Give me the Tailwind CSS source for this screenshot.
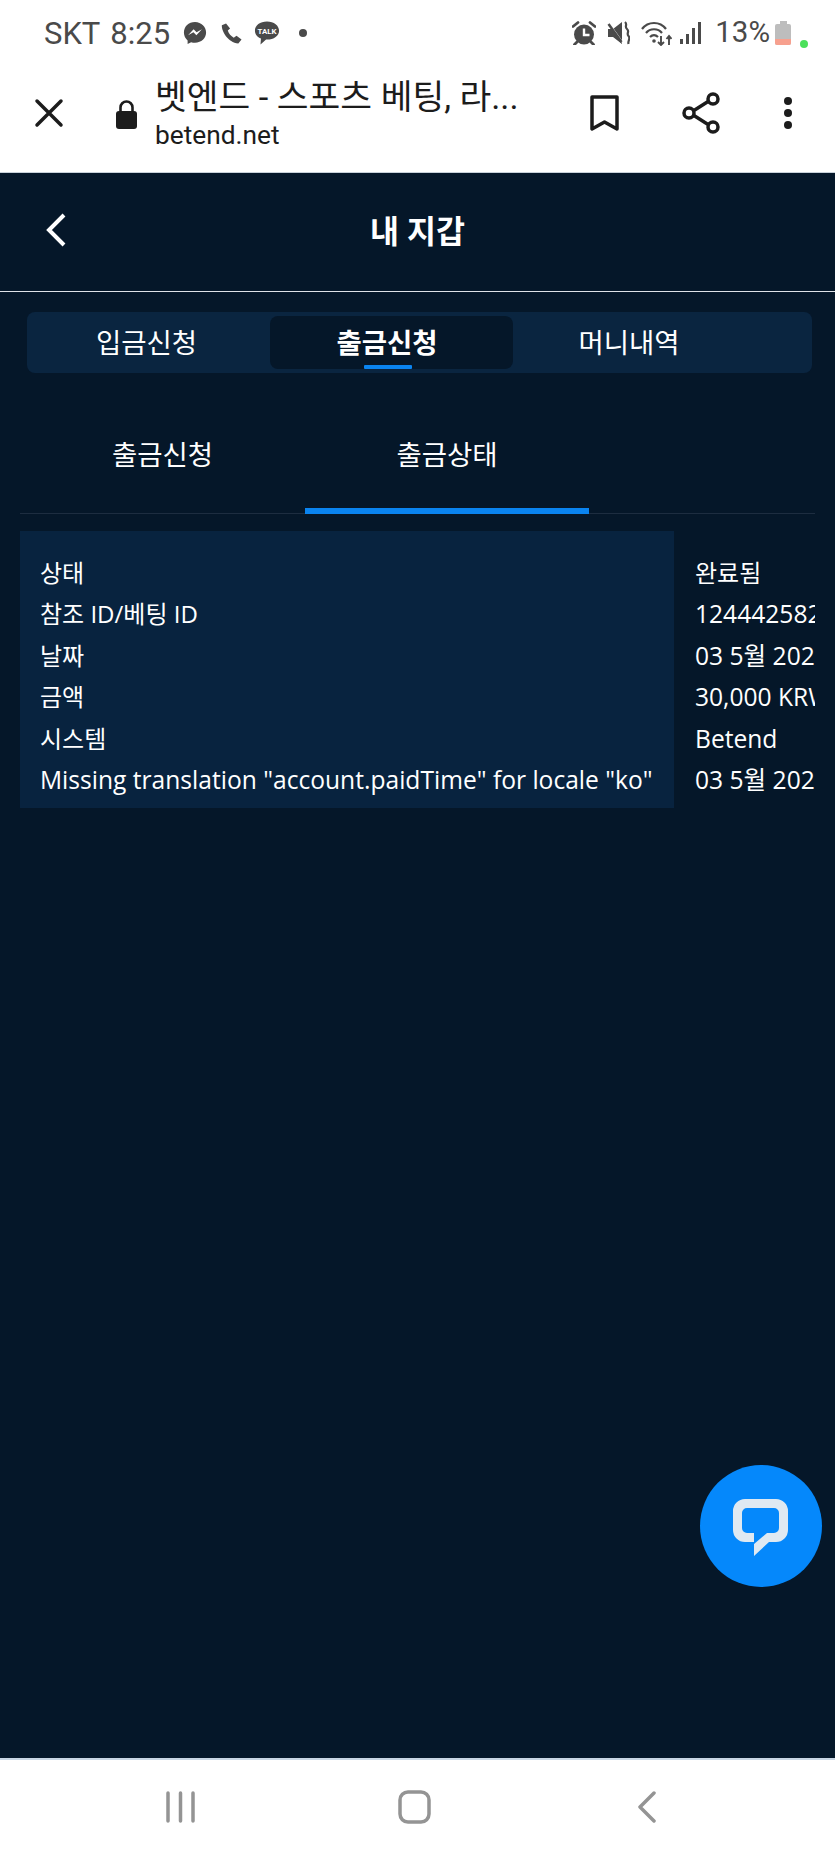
<!DOCTYPE html>
<html lang="ko">
<head>
<meta charset="utf-8">
<script src="https://cdn.jsdelivr.net/npm/@tailwindcss/browser@4"></script>
</head>
<body class="m-0">
<div class="relative w-[835px] h-[1856px] flex flex-col overflow-hidden bg-[#051729] font-['Roboto','Noto_Sans_CJK_KR',sans-serif]">

  <!-- status bar -->
  <div class="h-[62px] pt-[4px] bg-white flex items-center justify-between pl-[44px] pr-[27px] text-[#4a4a4a] shrink-0">
    <div class="flex items-center">
      <span class="text-[31px] leading-none mr-[10px]">SKT</span>
      <span class="text-[31px] leading-none mr-[13px]">8:25</span>
      <svg class="w-[24px] h-[24px] mr-[13px]" viewBox="0 0 26 26"><path fill="#4a4a4a" d="M13 1C6 1 1 6 1 12.500c0 3.500 1.500 6.500 4 8.500v4l3.800-2.100c1.300.4 2.700.6 4.200.6 7 0 12-5 12-11S20 1 13 1z"/><path fill="#fff" d="M5.500 15.500l6-6.500 3.200 3.200 5.800-3.200-6 6.500-3.200-3.200z"/></svg>
      <svg class="w-[22px] h-[23px] mr-[12px]" viewBox="0 0 24 24"><path fill="#4a4a4a" d="M6.600 1L2 3C1.500 9 8.500 22 20 23l3.500-4.500-5.500-4-3 2.200C12 15 9.500 12 8.500 8.800l2.500-2.300z"/></svg>
      <svg class="w-[26px] h-[26px] mr-[19px]" viewBox="0 0 28 27"><path fill="#4a4a4a" d="M14 1C6.500 1 1 5.200 1 11c0 4 2.700 7 6.500 8.500L7 26l6-5.500h1c7.500 0 13-4 13-9.500S21.500 1 14 1z"/><text x="14" y="14.500" text-anchor="middle" fill="#fff" font-size="8.500" font-weight="700" font-family="Roboto">TALK</text></svg>
      <span class="w-[8px] h-[8px] rounded-full bg-[#4a4a4a]"></span>
    </div>
    <div class="flex items-center">
      <svg class="w-[24px] h-[24px] mr-[11px]" viewBox="0 0 24 24"><circle cx="12" cy="13.500" r="10" fill="#4a4a4a"/><path d="M12 7.500V14h5.500" fill="none" stroke="#fff" stroke-width="2.400"/><path d="M1 5.500l5-4M23 5.500l-5-4M5 21l-2.500 2.500M19 21l2.500 2.500" stroke="#4a4a4a" stroke-width="2.800" stroke-linecap="round"/></svg>
      <svg class="w-[23px] h-[24px] mr-[11px]" viewBox="0 0 23 24"><path fill="#4a4a4a" d="M1 8h5l9-7v22l-9-7H1z"/><path d="M1 1l15 21" stroke="#fff" stroke-width="1.500"/><path d="M1.500 3l13 18" stroke="#4a4a4a" stroke-width="2.500"/><path d="M18 1c3 2.500-1 4.500 2 7s-1 4.500 1.500 7-1 4.500 0 8" fill="none" stroke="#4a4a4a" stroke-width="2.200"/></svg>
      <svg class="w-[31px] h-[25px] mr-[8px]" viewBox="0 0 31 25"><path d="M1 8c6-8 18-8 24 0M5 12c4-5 12-5 16 0M9 16c2.500-2.500 5.500-2.500 8 0" fill="none" stroke="#4a4a4a" stroke-width="2.200"/><circle cx="13" cy="20" r="1.800" fill="#4a4a4a"/><path d="M20 15v9M17 21l3 3 3-3M28 24v-9M25.500 18l2.500-3 2.500 3" fill="none" stroke="#4a4a4a" stroke-width="1.900"/></svg>
      <svg class="w-[21px] h-[24px] mr-[14px]" viewBox="0 0 21 24"><rect x="0" y="18" width="3" height="5" fill="#4a4a4a"/><rect x="6" y="13" width="3" height="10" fill="#4a4a4a"/><rect x="12" y="7" width="3" height="16" fill="#4a4a4a"/><rect x="18" y="1" width="3" height="22" fill="#4a4a4a"/></svg>
      <span class="text-[29.500px] leading-none mr-[5px]">13%</span>
      <div class="w-[16px] h-[24px] flex flex-col items-center mr-[9px]">
        <div class="w-[7px] h-[3px] bg-[#bdbdbd]"></div>
        <div class="w-[16px] h-[21px] rounded-[2px] bg-[#bdbdbd] flex flex-col justify-end overflow-hidden"><div class="h-[6px] bg-[#f7a08e]"></div></div>
      </div>
      <span class="w-[8px] h-[8px] rounded-full bg-[#4be05a] mt-[22px]"></span>
    </div>
  </div>

  <!-- browser toolbar -->
  <div class="h-[110px] pb-[8px] bg-white flex items-center shrink-0 text-[#1c1c1c]">
    <svg class="w-[30px] h-[30px] ml-[34px] -mt-[1px]" viewBox="0 0 30 30"><path d="M3 3l24 24M27 3L3 27" stroke="#1c1c1c" stroke-width="3.500" stroke-linecap="round"/></svg>
    <svg class="w-[23px] h-[29px] ml-[51px] mt-[2px]" viewBox="0 0 23 29"><rect x="1" y="11" width="21" height="18" rx="3" fill="#1c1c1c"/><path d="M5.500 12V7.500a6 6 0 0 1 12 0V12" fill="none" stroke="#1c1c1c" stroke-width="2.600"/></svg>
    <div class="ml-[17px] mt-[2px] w-[400px] flex flex-col">
      <div class="text-[34.500px] leading-[38px] whitespace-nowrap">벳엔드 - 스포츠 베팅, 라...</div>
      <div class="text-[26.300px] leading-[30px] mt-[4px]">betend.net</div>
    </div>
    <svg class="w-[29px] h-[37px] ml-[35px]" viewBox="0 0 29 37"><path d="M2 2h25v32L14.500 27 2 34z" fill="none" stroke="#1c1c1c" stroke-width="3.500" stroke-linejoin="round"/></svg>
    <svg class="w-[38px] h-[42px] ml-[63px]" viewBox="0 0 38 42"><path d="M8 21L30 7M8 21l22 14" stroke="#1c1c1c" stroke-width="3.500"/><circle cx="7" cy="21" r="5" fill="#fff" stroke="#1c1c1c" stroke-width="3.500"/><circle cx="31" cy="7" r="5" fill="#fff" stroke="#1c1c1c" stroke-width="3.500"/><circle cx="31" cy="35" r="5" fill="#fff" stroke="#1c1c1c" stroke-width="3.500"/></svg>
    <div class="ml-[64px] flex flex-col gap-[4px]">
      <span class="w-[8px] h-[8px] rounded-full bg-[#1c1c1c]"></span>
      <span class="w-[8px] h-[8px] rounded-full bg-[#1c1c1c]"></span>
      <span class="w-[8px] h-[8px] rounded-full bg-[#1c1c1c]"></span>
    </div>
  </div>
  <div class="h-[1px] bg-[#c9d2da] shrink-0"></div>

  <!-- page -->
  <div class="flex-1 relative bg-[#051729] text-white font-['Open_Sans','Noto_Sans_CJK_KR',sans-serif]">
    <!-- title -->
    <div class="relative h-[119px] border-b border-[#dfe3e8] flex items-center justify-center">
      <svg class="absolute left-[45px] top-[40px] w-[22px] h-[34px]" viewBox="0 0 22 34"><path d="M19 2L4 17l15 15" fill="none" stroke="#fff" stroke-width="4"/></svg>
      <h1 class="text-[31.500px] font-bold leading-none -mt-[2px]">내 지갑</h1>
    </div>

    <!-- wallet tabs -->
    <div class="ml-[27px] mr-[23px] mt-[20px] h-[61px] rounded-[8px] bg-[#0a2540] py-[4px] flex items-stretch text-[27.500px]">
      <div class="w-[243px] pr-[4px] flex items-center justify-center">입금신청</div>
      <div class="relative w-[243px] pr-[9px] rounded-[8px] bg-[#051729] flex items-center justify-center font-bold">
        출금신청
        <span class="absolute left-[94px] bottom-0 w-[48px] h-[4px] rounded-[1px] bg-[#0a84f0]"></span>
      </div>
      <div class="w-[243px] pr-[11px] flex items-center justify-center">머니내역</div>
    </div>

    <!-- sub tabs -->
    <div class="mx-[20px] mt-[60px] h-[81px] flex border-b border-[#1d2d40] text-[27.500px]">
      <div class="w-[285px] h-[81px] flex items-start justify-center pt-[1px]">출금신청</div>
      <div class="w-[284px] h-[81px] flex items-start justify-center pt-[1px] border-b-[6px] border-[#0a84f0]">출금상태</div>
    </div>

    <!-- details table -->
    <div class="mx-[20px] mt-[17px] overflow-hidden flex text-[24px] leading-[41.400px] whitespace-nowrap">
      <div class="w-[654px] shrink-0 bg-[#08233f] px-[20px] pt-[21px] pb-[8px]">
        <div>상태</div>
        <div>참조 ID/베팅 ID</div>
        <div>날짜</div>
        <div>금액</div>
        <div>시스템</div>
        <div class="text-[24.600px]">Missing translation "account.paidTime" for locale "ko"</div>
      </div>
      <div class="pl-[21px] pt-[21px] pb-[8px]">
        <div>완료됨</div>
        <div class="text-[24.600px]">1244425821</div>
        <div class="text-[24.600px]">03 5월 2022</div>
        <div class="text-[24.600px]">30,000 KRW</div>
        <div class="text-[24.600px]">Betend</div>
        <div class="text-[24.600px]">03 5월 2022</div>
      </div>
    </div>

    <!-- chat button -->
    <div class="absolute left-[700px] top-[1292px] w-[122px] h-[122px] rounded-full bg-[#0588fb] flex items-center justify-center">
      <svg class="w-[72px] h-[72px]" viewBox="0 0 72 72"><path fill="#dfe9f2" fill-rule="evenodd" d="M20 9h31a12 12 0 0 1 12 12v19a12 12 0 0 1-12 12H44L29 66V52h-9a12 12 0 0 1-12-12V21A12 12 0 0 1 20 9zM22 18a5 5 0 0 0-5 5v15a5 5 0 0 0 5 5h7v11l13-11h7a5 5 0 0 0 5-5V23a5 5 0 0 0-5-5z"/></svg>
    </div>
  </div>

  <!-- navigation bar -->
  <div class="h-[98px] shrink-0 bg-white border-t-2 border-[#c9d6e4] flex items-start pt-[31px]">
    <svg class="w-[30px] h-[32px] ml-[166px]" viewBox="0 0 30 32"><path d="M2 2v28M14.500 2v28M27 2v28" stroke="#949494" stroke-width="3.500" stroke-linecap="round"/></svg>
    <svg class="w-[33px] h-[34px] ml-[202px] -mt-[1px]" viewBox="0 0 33 34"><rect x="2" y="2" width="29" height="30" rx="8" fill="none" stroke="#949494" stroke-width="3.500"/></svg>
    <svg class="w-[20px] h-[32px] ml-[206px]" viewBox="0 0 20 32"><path d="M17 2L3 16l14 14" fill="none" stroke="#949494" stroke-width="3.500" stroke-linecap="round" stroke-linejoin="round"/></svg>
  </div>
</div>
</body>
</html>
